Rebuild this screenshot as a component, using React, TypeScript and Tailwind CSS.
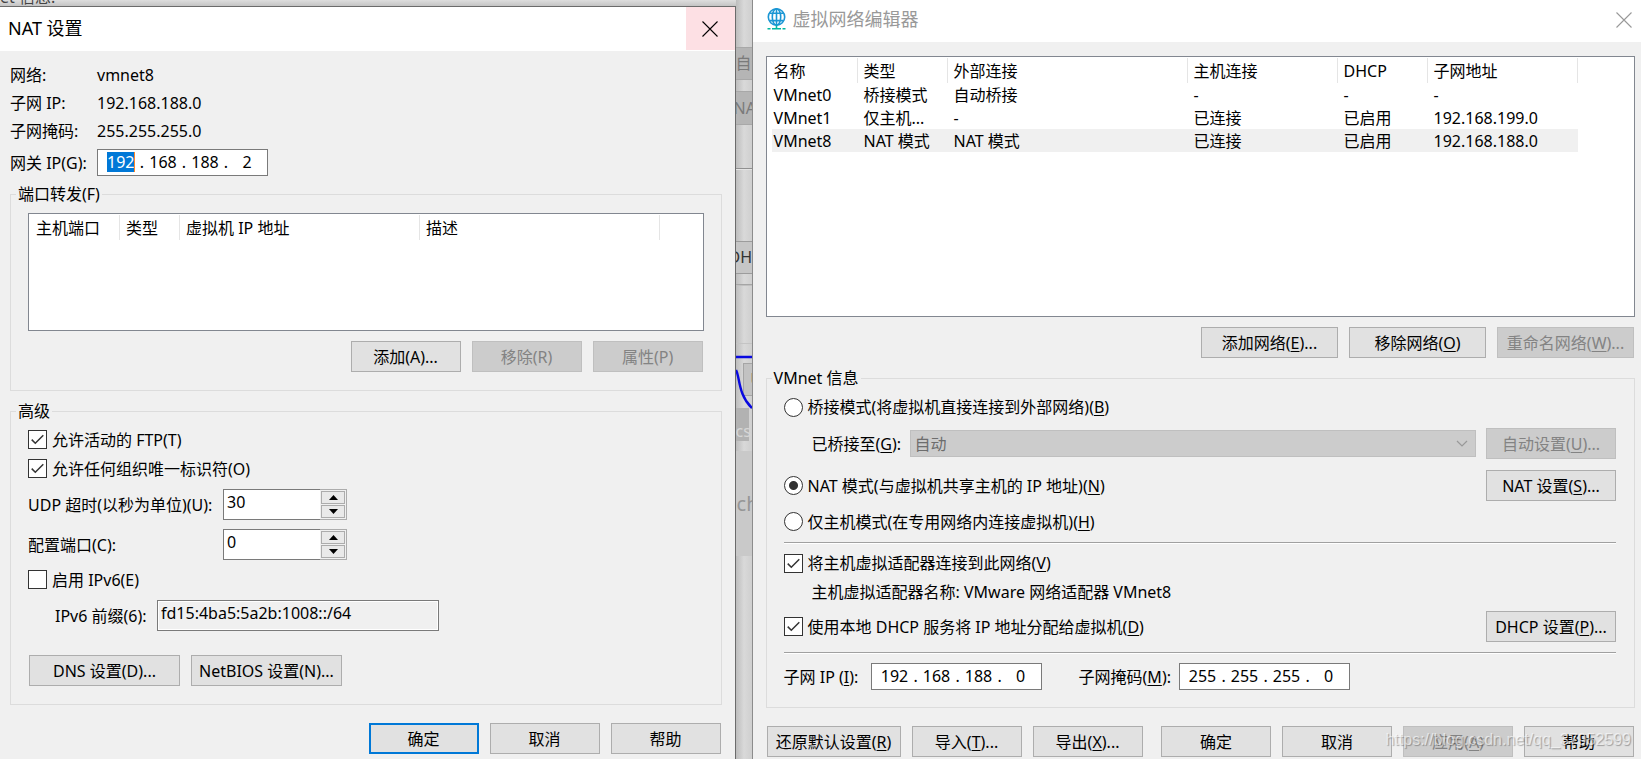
import { useState, type ReactNode } from 'react';
import clsx from 'clsx';

interface ButtonProps {
    children: ReactNode;
    className?: string;
    disabled?: boolean;
    primary?: boolean;
}

const Button = ({ children, className, disabled, primary }: ButtonProps) => (
    <button
        type="button"
        disabled={disabled}
        className={clsx(
            'h-[31px] shrink-0 whitespace-nowrap text-center',
            className ?? 'w-[110px]',
            disabled && 'border border-[#bfbfbf] bg-[#cccccc] text-[#838383]',
            !disabled && primary && 'border-2 border-[#0078d7] bg-[#e1e1e1]',
            !disabled && !primary && 'border border-[#adadad] bg-[#e1e1e1]',
        )}
    >
        {children}
    </button>
);

// Access key letter
const Key = ({ children }: { children: string }) => (
    <span className="underline decoration-1 underline-offset-2">{children}</span>
);

interface GroupProps {
    title: string;
    className?: string;
    children: ReactNode;
}

const Group = ({ title, className, children }: GroupProps) => (
    <fieldset className={clsx('min-w-0 border border-[#dcdcdc] px-[17px]', className)}>
        <legend className="-ml-3 h-6 px-[2px] leading-6">{title}</legend>
        {children}
    </fieldset>
);

interface CheckProps {
    id: string;
    defaultChecked?: boolean;
    children: ReactNode;
}

const Check = ({ id, defaultChecked, children }: CheckProps) => {
    const [checked, setChecked] = useState(!!defaultChecked);

    return (
        <div className="flex items-center gap-[5px]">
            <span className="relative block size-[19px] shrink-0">
                <input
                    id={id}
                    type="checkbox"
                    checked={checked}
                    onChange={(e) => setChecked(e.target.checked)}
                    className="block size-[19px] appearance-none border border-[#333333] bg-white"
                />
                {checked && (
                    <svg className="pointer-events-none absolute inset-0" width="19" height="19" viewBox="0 0 19 19" fill="none">
                        <path d="M3.7 9.6 L7.3 13.2 L15.3 5.2" stroke="#333333" strokeWidth="1.5" />
                    </svg>
                )}
            </span>
            <label htmlFor={id}>{children}</label>
        </div>
    );
};

interface RadioProps {
    id: string;
    defaultChecked?: boolean;
    children: ReactNode;
}

const Radio = ({ id, defaultChecked, children }: RadioProps) => (
    <div className="flex items-center gap-[5px]">
        <input
            id={id}
            type="radio"
            name="mode"
            defaultChecked={defaultChecked}
            className="size-[19px] shrink-0 appearance-none rounded-full border border-[#333333] bg-white checked:bg-[radial-gradient(circle,#333333_4px,white_5px)]"
        />
        <label htmlFor={id}>{children}</label>
    </div>
);

interface IpBoxProps {
    id: string;
    value: string[];
    selected?: number;
}

const IpBox = ({ id, value, selected }: IpBoxProps) => (
    <div className="flex h-[27px] w-[171px] shrink-0 items-center border border-[#7a7a7a] bg-white pb-px pl-[6px]">
        {value.map((part, index) => (
            <div key={index} className="flex items-center">
                <input
                    id={index === 0 ? id : undefined}
                    aria-label={index === 0 ? undefined : `${id}-${index + 1}`}
                    defaultValue={part}
                    className={clsx(
                        'h-5 p-0 text-center leading-5 outline-none',
                        selected === index ? 'mx-[3px] w-7 border-r border-[#ff8728] bg-[#0078d7] text-white' : 'w-[34px]',
                    )}
                />
                {index < 3 && <span className="w-2 text-center">.</span>}
            </div>
        ))}
    </div>
);

const Spinner = ({ id, initial }: { id: string; initial: number }) => {
    const [value, setValue] = useState(initial);

    return (
        <div className="flex h-[31px] w-[124px] shrink-0">
            <input
                id={id}
                value={value}
                onChange={(e) => setValue(Number(e.target.value) || 0)}
                className="w-[97px] border border-r-0 border-[#7a7a7a] bg-white pb-[5px] pl-[3px] outline-none"
            />
            <div className="flex flex-1 flex-col justify-between border border-l-0 border-[#acacac] p-px">
                <button
                    type="button"
                    aria-label="+"
                    onClick={() => setValue(value + 1)}
                    className="flex h-[13px] items-center justify-center border border-[#acacac] bg-[#e9e9e9]"
                >
                    <svg width="9" height="5" viewBox="0 0 9 5"><path d="M4.5 0 L9 5 H0 Z" /></svg>
                </button>
                <button
                    type="button"
                    aria-label="-"
                    onClick={() => setValue(Math.max(0, value - 1))}
                    className="flex h-[13px] items-center justify-center border border-[#acacac] bg-[#e9e9e9]"
                >
                    <svg width="9" height="5" viewBox="0 0 9 5"><path d="M0 0 H9 L4.5 5 Z" /></svg>
                </button>
            </div>
        </div>
    );
};

const CloseIcon = () => (
    <svg width="16" height="16" viewBox="0 0 16 16" fill="none" stroke="currentColor">
        <path d="M0.5 0.5 L15.5 15.5 M15.5 0.5 L0.5 15.5" strokeWidth="1.1" />
    </svg>
);

const GlobeIcon = () => (
    <svg className="mt-px" width="20" height="22" viewBox="0 0 20 22" fill="none">
        <g stroke="#1a96d4" strokeWidth="1.6">
            <circle cx="10.5" cy="9" r="8.2" />
            <ellipse cx="10.5" cy="9" rx="4.2" ry="8.2" />
            <path d="M10.5 0.8 V17 M3.5 5.2 H17.5 M3.5 12.6 H17.5" />
        </g>
        <path d="M10.5 17.5 V20 M6 20.8 H15 M1.5 20.8 H4.5 M16.5 20.8 H19.5" stroke="#00b8a0" strokeWidth="1.6" />
    </svg>
);

const Separator = () => <hr className="mr-px h-[2px] border-0 border-b border-t border-b-white border-t-[#a0a0a0]" />;

const portColumns = [
    { name: '主机端口', width: 'w-[91px]' },
    { name: '类型', width: 'w-[60px]' },
    { name: '虚拟机 IP 地址', width: 'w-[240px]' },
    { name: '描述', width: 'w-[240px]' },
];

const networkColumns = [
    { name: '名称', width: 'w-[91px]' },
    { name: '类型', width: 'w-[90px]' },
    { name: '外部连接', width: 'w-[240px]' },
    { name: '主机连接', width: 'w-[150px]' },
    { name: 'DHCP', width: 'w-[90px]' },
    { name: '子网地址', width: 'w-[150px]' },
];

const networks = [
    ['VMnet0', '桥接模式', '自动桥接', '-', '-', '-'],
    ['VMnet1', '仅主机...', '-', '已连接', '已启用', '192.168.199.0'],
    ['VMnet8', 'NAT 模式', 'NAT 模式', '已连接', '已启用', '192.168.188.0'],
];

interface ListHeadProps {
    columns: { name: string; width: string }[];
}

const ListHead = ({ columns }: ListHeadProps) => (
    <thead>
        <tr>
            {columns.map((col, index) => (
                <th
                    key={index}
                    className={clsx(
                        'h-[25px] border-r border-[#e5e5e5] p-0 pt-[2px] text-left font-normal leading-[23px]',
                        index === 0 ? 'pl-[7px]' : 'pl-[6px]',
                        col.width,
                    )}
                >
                    {col.name}
                </th>
            ))}
        </tr>
    </thead>
);

const NatSettings = () => (
    <section className="flex flex-1 flex-col border-r border-t border-[#6b6b6b] bg-[#f0f0f0]">
        <header className="flex h-11 items-center justify-between bg-white pl-2">
            <h1 className="pb-[2px] text-lg leading-6">NAT 设置</h1>
            <button type="button" aria-label="关闭" className="mb-px flex h-[43px] w-[49px] items-center justify-center bg-[#fde0e4]">
                <CloseIcon />
            </button>
        </header>

        <div className="flex flex-col pb-[5px] pl-[10px] pr-[13px] pt-[10px]">
            <dl className="grid grid-cols-[87px_1fr] leading-7">
                <dt>网络:</dt>
                <dd>vmnet8</dd>
                <dt>子网 IP:</dt>
                <dd>192.168.188.0</dd>
                <dt>子网掩码:</dt>
                <dd>255.255.255.0</dd>
            </dl>
            <div className="mt-1 flex items-center">
                <label htmlFor="gateway" className="w-[87px] whitespace-nowrap">网关 IP(G):</label>
                <IpBox id="gateway" value={['192', '168', '188', '2']} selected={0} />
            </div>

            <Group title="端口转发(F)" className="mt-[6px] pb-[18px]">
                <div className="mt-[7px] h-[118px] overflow-hidden border border-[#828790] bg-white pt-px">
                    <table className="w-[631px] table-fixed border-separate border-spacing-0">
                        <ListHead columns={portColumns} />
                    </table>
                </div>
                <div className="mr-px mt-[10px] flex justify-end gap-[11px]">
                    <Button>添加(A)...</Button>
                    <Button disabled>移除(R)</Button>
                    <Button disabled>属性(P)</Button>
                </div>
            </Group>

            <Group title="高级" className="mt-2 pb-[18px]">
                <div className="mt-[2px] flex h-[29px] items-center">
                    <Check id="ftp" defaultChecked>允许活动的 FTP(T)</Check>
                </div>
                <div className="flex h-[29px] items-center">
                    <Check id="oui" defaultChecked>允许任何组织唯一标识符(O)</Check>
                </div>
                <div className="mt-[6px] flex items-center">
                    <label htmlFor="udp" className="w-[195px] whitespace-nowrap">UDP 超时(以秒为单位)(U):</label>
                    <Spinner id="udp" initial={30} />
                </div>
                <div className="mt-[9px] flex items-center">
                    <label htmlFor="port" className="w-[195px]">配置端口(C):</label>
                    <Spinner id="port" initial={0} />
                </div>
                <div className="mt-[5px] flex h-[29px] items-center">
                    <Check id="ipv6">启用 IPv6(E)</Check>
                </div>
                <div className="mt-[6px] flex items-center pl-[27px]">
                    <label htmlFor="prefix" className="w-[102px] whitespace-nowrap">IPv6 前缀(6):</label>
                    <input
                        id="prefix"
                        readOnly
                        defaultValue="fd15:4ba5:5a2b:1008::/64"
                        className="h-[31px] w-[282px] border border-[#7a7a7a] pb-[5px] pl-[3px] shadow-[inset_0_0_0_1px_white] outline-none"
                    />
                </div>
                <div className="ml-px mt-6 flex gap-[11px]">
                    <Button className="w-[151px]">DNS 设置(D)...</Button>
                    <Button className="w-[151px]">NetBIOS 设置(N)...</Button>
                </div>
            </Group>

            <div className="mr-px mt-[18px] flex justify-end gap-[11px]">
                <Button primary>确定</Button>
                <Button>取消</Button>
                <Button>帮助</Button>
            </div>
        </div>
    </section>
);

const NetworkEditor = () => (
    <section className="flex min-w-0 flex-[889] flex-col border-l border-[#8c8c8c] bg-[#f0f0f0]">
        <header className="flex h-[42px] items-start bg-white pl-[13px] pr-[9px] pt-[7px] text-[#999999]">
            <GlobeIcon />
            <h1 className="ml-[7px] flex-1 text-lg leading-6">虚拟网络编辑器</h1>
            <button type="button" aria-label="关闭" className="mt-[5px]">
                <CloseIcon />
            </button>
        </header>

        <div className="flex flex-col pb-[2px] pl-[13px] pr-[6px] pt-[14px]">
            <div className="h-[261px] overflow-hidden border border-[#828790] bg-white pt-px">
                <table className="w-[811px] table-fixed border-separate border-spacing-0">
                    <ListHead columns={networkColumns} />
                    <tbody>
                        {networks.map((row, index) => (
                            <tr key={row[0]} className={index === 2 ? 'bg-[#f0f0f0]' : 'bg-white'}>
                                {row.map((cell, i) => (
                                    <td
                                        key={i}
                                        className={clsx(
                                            'h-[23px] whitespace-nowrap p-0 pt-[2px] leading-[21px]',
                                            i === 0 ? 'border-l-[5px] border-white pl-[2px]' : 'pl-[6px]',
                                        )}
                                    >
                                        {cell}
                                    </td>
                                ))}
                            </tr>
                        ))}
                    </tbody>
                </table>
            </div>
            <div className="mr-px mt-[10px] flex justify-end gap-[11px]">
                <Button className="w-[137px]">添加网络(<Key>E</Key>)...</Button>
                <Button className="w-[137px]">移除网络(<Key>O</Key>)</Button>
                <Button className="w-[137px]" disabled>重命名网络(<Key>W</Key>)...</Button>
            </div>

            <Group title="VMnet 信息" className="mt-2 pb-[17px]">
                <div className="mt-px flex h-8 items-center">
                    <Radio id="bridged">桥接模式(将虚拟机直接连接到外部网络)(<Key>B</Key>)</Radio>
                </div>
                <div className="mr-px mt-[5px] flex items-center pl-7">
                    <label htmlFor="adapter" className="w-[98px] whitespace-nowrap">已桥接至(<Key>G</Key>):</label>
                    <div className="relative flex-1">
                        <select
                            id="adapter"
                            disabled
                            className="block h-[27px] w-full appearance-none border border-[#bfbfbf] bg-[#cccccc] pl-1 text-[#6d6d6d] opacity-100"
                        >
                            <option>自动</option>
                        </select>
                        <svg className="pointer-events-none absolute right-2 top-[10px]" width="12" height="7" viewBox="0 0 12 7" fill="none">
                            <path d="M1 1 L6 6 L11 1" stroke="#999999" strokeWidth="1.2" />
                        </svg>
                    </div>
                    <Button className="ml-[10px] w-[130px]" disabled>自动设置(<Key>U</Key>)...</Button>
                </div>
                <div className="mr-px mt-[11px] flex items-center justify-between">
                    <Radio id="nat" defaultChecked>NAT 模式(与虚拟机共享主机的 IP 地址)(<Key>N</Key>)</Radio>
                    <Button className="w-[130px]">NAT 设置(<Key>S</Key>)...</Button>
                </div>
                <div className="mb-[5px] mt-[5px] flex h-[31px] items-center">
                    <Radio id="hostonly">仅主机模式(在专用网络内连接虚拟机)(<Key>H</Key>)</Radio>
                </div>
                <Separator />
                <div className="mt-1 flex h-[30px] items-center">
                    <Check id="connect" defaultChecked>将主机虚拟适配器连接到此网络(<Key>V</Key>)</Check>
                </div>
                <p className="pl-7 leading-7">主机虚拟适配器名称: VMware 网络适配器 VMnet8</p>
                <div className="mb-[10px] mr-px mt-[5px] flex items-center justify-between">
                    <Check id="dhcp" defaultChecked>使用本地 DHCP 服务将 IP 地址分配给虚拟机(<Key>D</Key>)</Check>
                    <Button className="w-[130px]">DHCP 设置(<Key>P</Key>)...</Button>
                </div>
                <Separator />
                <div className="mt-[9px] flex items-center">
                    <label htmlFor="subnet" className="w-[87px] whitespace-nowrap">子网 IP (<Key>I</Key>):</label>
                    <IpBox id="subnet" value={['192', '168', '188', '0']} />
                    <label htmlFor="mask" className="ml-[37px] w-[100px] whitespace-nowrap">子网掩码(<Key>M</Key>):</label>
                    <IpBox id="mask" value={['255', '255', '255', '0']} />
                </div>
            </Group>

            <div className="relative mr-px mt-[18px] flex justify-between">
                <div className="ml-px flex gap-[11px]">
                    <Button className="w-[134px]">还原默认设置(<Key>R</Key>)</Button>
                    <Button>导入(<Key>T</Key>)...</Button>
                    <Button>导出(<Key>X</Key>)...</Button>
                </div>
                <div className="flex gap-[11px]">
                    <Button>确定</Button>
                    <Button>取消</Button>
                    <Button disabled>应用(<Key>A</Key>)</Button>
                    <Button>帮助</Button>
                </div>
                <span className="pointer-events-none absolute right-[3px] top-[2px] font-['Liberation_Sans',sans-serif] leading-6 text-white/60 [text-shadow:1px_1px_1px_rgba(0,0,0,0.3)]">
                    https://blog.csdn.net/qq_37952599
                </span>
            </div>
        </div>
    </section>
);

// Slice of the dimmed window that shows between the two dialogs
const Backdrop = () => (
    <div className="relative flex w-4 shrink-0 flex-col overflow-hidden whitespace-nowrap bg-[#d9d9d9] bg-gradient-to-r from-[#bdbdbd] via-[#d9d9d9] to-[#cfcfcf]">
        <div className="mt-[47px] h-[33px] border-y border-[#a8a8a8] bg-[#b5b5b5] leading-[31px] text-[#7a7a7a]">自动</div>
        <div className="mt-[11px] h-[34px] border-y border-[#a8a8a8] bg-[#b5b5b5] leading-8 text-[#7a7a7a]">
            <span className="-ml-[2px]">NAT</span>
        </div>
        <div className="mt-[43px] h-[2px] border-t border-[#909090] bg-[#e4e4e4]" />
        <div className="mt-[71px] h-[33px] border-y border-[#9c9c9c] bg-[#c6c6c6] leading-[31px] text-[#333333]">
            <span className="-ml-[7px]">DHCP</span>
        </div>
        <div className="mt-[10px] h-[2px] border-t border-[#a5a5a5] bg-[#c0c0c0]" />
        <div className="mt-[57px] h-px bg-[#c4c4c4]" />
        <div className="ml-[7px] mt-[19px] h-[33px] border border-r-0 border-[#a5a5a5] bg-[#c2c2c2] pl-[7px] leading-[31px] text-[#333333]">U</div>
        <div className="mt-3 h-[33px] w-[13px] bg-[#b2b2b2] leading-[46px] text-[#d6d6d6]">cs</div>
        <div className="mt-[10px] h-[105px] bg-[#c9c9c9] pl-px text-xl leading-[105px] text-[#969696]">ch</div>
        <svg className="absolute left-0 top-[355px]" width="16" height="56" viewBox="0 0 16 56" fill="none">
            <path d="M0 2 H16 M0 15 C4 22 2 40 16 53" stroke="#0808e0" strokeWidth="2.4" />
        </svg>
    </div>
);

const App = () => (
    <main className="flex min-h-screen bg-[#d9d9d9] font-['Noto_Sans','Noto_Sans_CJK_SC',sans-serif] text-base leading-6 text-black">
        <div className="flex min-w-0 flex-[736] flex-col">
            <div className="flex h-[6px] flex-col justify-end overflow-hidden bg-gradient-to-b from-[#dedede] to-[#c4c4c4] text-[#444444]">
                <span className="leading-[18px]">et 信息:</span>
            </div>
            <NatSettings />
        </div>
        <Backdrop />
        <NetworkEditor />
    </main>
);

export default App;
